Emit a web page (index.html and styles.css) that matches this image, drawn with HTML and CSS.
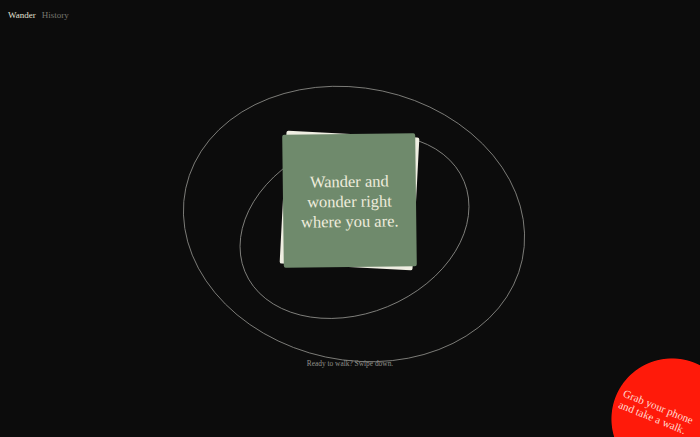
FILE: index.html
```html
<!DOCTYPE html>
<html>
<head>
<meta charset="utf-8">
<link rel="stylesheet" href="styles.css">
</head>
<body>
<svg class="orbits" viewBox="0 0 700 437" width="700" height="437">
  <ellipse cx="354" cy="224" rx="172" ry="136" transform="rotate(12 354 224)" />
  <ellipse cx="354.5" cy="226.5" rx="118.5" ry="86.7" transform="rotate(-22.3 354.5 226.5)" />
</svg>
<header class="nav">
  <span class="nav-item active">Wander</span>
  <span class="nav-item">History</span>
</header>
<main class="stage">
  <div class="stack">
    <div class="card-back"></div>
    <div class="card-front">
      <p class="card-text">Wander and<br>wonder right<br>where you are.</p>
    </div>
  </div>
</main>
<p class="hint">Ready to walk? Swipe down.</p>
<div class="badge">
  <p class="badge-text">Grab your phone<br>and take a walk.</p>
</div>
</body>
</html>
```
FILE: styles.css
```css
html, body {
  margin: 0;
  padding: 0;
}
html {
  height: 437px;
  overflow: hidden;
}
body {
  width: 700px;
  height: 437px;
  overflow: hidden;
  background: #0c0c0c;
  position: relative;
  font-family: "Liberation Serif", "DejaVu Serif", serif;
  display: flex;
  flex-direction: column;
}
.orbits {
  position: absolute;
  left: 0;
  top: 0;
}
.orbits ellipse {
  fill: none;
  stroke: #8c8c88;
  stroke-width: 0.8;
}
.nav {
  position: relative;
  display: flex;
  gap: 6px;
  padding: 9px 8px 7px;
  height: 12px;
  font-size: 9px;
  line-height: 12px;
}
.nav-item {
  color: #77776f;
}
.nav-item.active {
  color: #e2e0d4;
}
.stage {
  position: relative;
  display: flex;
  justify-content: center;
  padding-top: 106px;
  padding-right: 2px;
}
.stack {
  position: relative;
  width: 133px;
  height: 133px;
}
.card-back {
  position: absolute;
  inset: 0;
  background: #efeee2;
  border-radius: 2px;
  transform: rotate(3deg);
}
.card-front {
  position: absolute;
  inset: 0;
  background: #6f8a6c;
  border-radius: 2px;
  transform: rotate(-0.7deg);
  display: flex;
  align-items: center;
  justify-content: center;
}
.card-text {
  margin: 0;
  padding-top: 2px;
  color: #eeecdc;
  font-size: 16.5px;
  line-height: 20px;
  text-align: center;
}
.hint {
  position: relative;
  margin: 92px 0 0;
  text-align: center;
  font-size: 7.4px;
  line-height: 10px;
  color: #8f8f8a;
}
.badge {
  position: absolute;
  right: 0;
  bottom: 0;
  width: 89px;
  height: 79px;
  background: radial-gradient(circle 61px at 61px 61px, #ff1a0a 98.5%, rgba(255, 26, 10, 0) 100%);
  overflow: hidden;
}
.badge-text {
  position: absolute;
  left: 15px;
  top: 29px;
  margin: 0;
  white-space: nowrap;
  color: #ffdcd4;
  font-size: 11px;
  line-height: 12px;
  transform: rotate(22deg);
  transform-origin: left top;
}
```
